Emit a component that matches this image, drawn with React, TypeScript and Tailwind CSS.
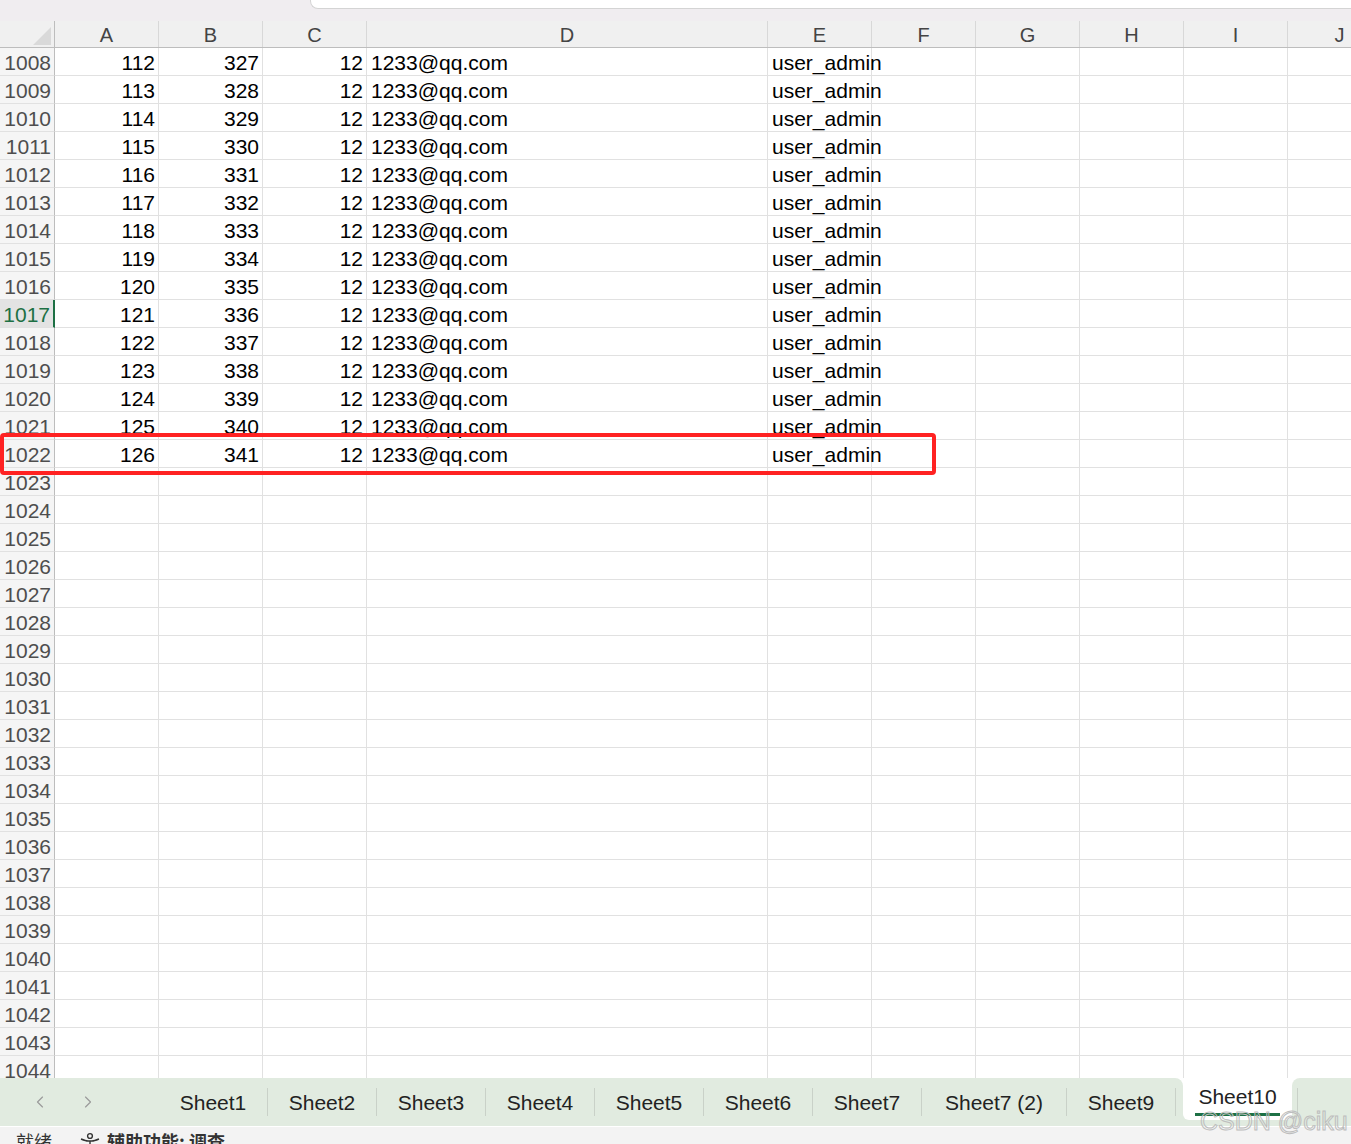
import { ChevronLeft, ChevronRight } from "lucide-react"

const cols = [
  { key: "A", w: "w-[104px]" },
  { key: "B", w: "w-[104px]" },
  { key: "C", w: "w-[104px]" },
  { key: "D", w: "w-[401px]" },
  { key: "E", w: "w-[104px]" },
  { key: "F", w: "w-[104px]" },
  { key: "G", w: "w-[104px]" },
  { key: "H", w: "w-[104px]" },
  { key: "I", w: "w-[104px]" },
  { key: "J", w: "w-[104px]" }
]

const rows = Array.from({ length: 37 }, (_, i) => {
  const n = 1008 + i
  if (n > 1022) return { n, cells: null }
  return {
    n,
    cells: { A: String(112 + i), B: String(327 + i), C: "12", D: "1233@qq.com", E: "user_admin" } as Record<string, string>
  }
})

const tabs = ["Sheet1", "Sheet2", "Sheet3", "Sheet4", "Sheet5", "Sheet6", "Sheet7", "Sheet7 (2)", "Sheet9"]

const RowHead = ({ n }: { n: number }) => {
  const active = n === 1017
  return (
    <div
      className={`w-[55px] shrink-0 h-[28px] flex items-center justify-end pr-[3px] pt-[2px] border-b border-[#e1e1e1] ${
        active ? "bg-[#e3e3e3] text-[#1d7044] border-r-2 border-r-[#1d7044]" : "bg-[#f5f5f5] text-[#4e4e4e] border-r border-r-[#bdbdbd]"
      }`}>
      {n}
    </div>
  )
}

export default function App() {
  return (
    <div className="relative w-[1351px] h-[1144px] overflow-hidden bg-white font-['Liberation_Sans',Arial,sans-serif] text-[21px] leading-none">
      {/* formula bar remnant */}
      <div className="h-[21px] bg-[#f0edf0] flex">
        <div className="w-[310px] shrink-0" />
        <div className="flex-1 h-[9px] bg-white border-l border-b border-[#d4d4d4] rounded-bl-[8px]" />
      </div>

      {/* grid */}
      <div className="h-[1057px] overflow-hidden">
        <div className="flex h-[27px] bg-[#f0f0f0] border-b border-[#bdbdbd] text-[20px] text-[#444]">
          <div className="w-[55px] shrink-0 relative border-r border-[#bdbdbd]">
            <div className="absolute right-[3px] bottom-[2px] w-0 h-0 border-l-[18px] border-l-transparent border-b-[18px] border-b-[#d9d9d9]" />
          </div>
          {cols.map((c) => (
            <div key={c.key} className={`${c.w} shrink-0 flex items-center justify-center pt-[2px] border-r border-[#d8d8d8]`}>
              {c.key}
            </div>
          ))}
        </div>

        {rows.map((r) => (
          <div key={r.n} className="flex h-[28px]">
            <RowHead n={r.n} />
            {cols.map((c) => {
              const v = r.cells?.[c.key]
              const left = c.key === "D" || c.key === "E"
              return (
                <div
                  key={c.key}
                  className={`${c.w} shrink-0 h-[28px] flex items-center pt-[2px] border-r border-b border-[#e1e1e1] text-black whitespace-nowrap ${
                    left ? "justify-start pl-[4px]" : "justify-end pr-[3px]"
                  }`}>
                  {v}
                </div>
              )
            })}
          </div>
        ))}
      </div>

      {/* sheet tabs */}
      <div className="h-[48px] flex bg-white">
        <div className="flex-none w-[1183px] bg-[#e1ebe0] rounded-tr-[8px] flex items-center">
          <div className="w-[159px] shrink-0 flex items-center pl-[30px] gap-[28px] text-[#9a9a9a]">
            <ChevronLeft size={20} strokeWidth={1.4} />
            <ChevronRight size={20} strokeWidth={1.4} />
          </div>
          {tabs.map((t) => (
            <div
              key={t}
              className={`${t === "Sheet7 (2)" ? "w-[145px]" : "w-[109px]"} shrink-0 h-[28px] flex items-center justify-center border-r border-[#c9d1c8] text-[#222]`}>
              {t}
            </div>
          ))}
        </div>
        <div className="w-[109px] shrink-0 bg-[#e1ebe0]">
          <div className="h-[42px] bg-white rounded-b-[6px] flex flex-col items-center pt-[8px]">
            <span className="text-[#222]">Sheet10</span>
            <div className="mt-[6px] w-[85px] h-[3px] bg-[#1d7044]" />
          </div>
        </div>
        <div className="flex-1 bg-white">
          <div className="h-full bg-[#e1ebe0] rounded-tl-[8px] flex items-center">
            <div className="w-[6px] h-[28px] border-r border-[#c9d1c8]" />
          </div>
        </div>
      </div>

      {/* status bar */}
      <div className="h-[18px] border-t border-white bg-[#f3f3f3] overflow-hidden flex items-start pt-[4px] text-[18px] text-[#333] font-['Noto_Sans_CJK_SC',sans-serif]">
        <span className="ml-[16px] leading-[20px]">就绪</span>
        <svg className="ml-[27px] mt-[1px]" width="22" height="22" viewBox="0 0 22 22" fill="none" stroke="#333" strokeWidth="1.4">
          <circle cx="11" cy="4" r="2.4" />
          <path d="M2 7 Q7 9 9 9 L13 9 Q15 9 20 7 M11 9 L11 14 M7 21 L10 14 M15 21 L12 14" />
        </svg>
        <span className="ml-[6px] leading-[20px] font-bold">辅助功能: 调查</span>
      </div>

      {/* annotation box */}
      <div className="absolute left-0 top-[433px] w-[936px] h-[42px] border-[4px] border-[#ff2222] rounded-[4px]" />

      {/* watermark */}
      <div className="absolute left-[1200px] top-[1109px] text-[25px] font-['Liberation_Sans',Arial,sans-serif] [-webkit-text-stroke:1px_#bdbdbd] text-transparent">
        CSDN @ciku
      </div>
    </div>
  )
}
